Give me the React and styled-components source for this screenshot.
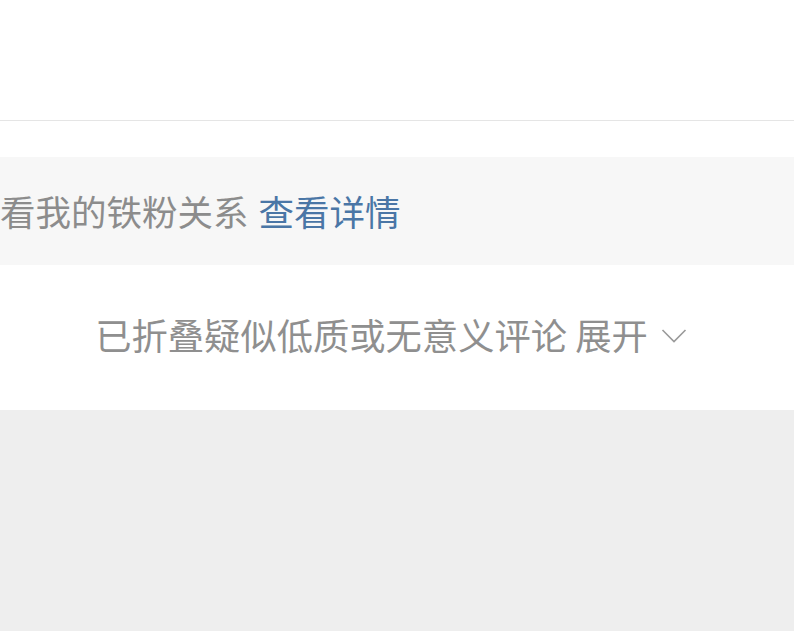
import React from "react";
import styled, { createGlobalStyle } from "styled-components";

const GlobalStyle = createGlobalStyle`
  html, body {
    margin: 0;
    padding: 0;
    background: #eeeeee;
  }
  body {
    font-family: "Noto Sans CJK SC", "Noto Sans", sans-serif;
  }
`;

const Page = styled.div`
  width: 794px;
  min-height: 631px;
  background: #eeeeee;
  overflow: hidden;
`;

const Card = styled.div`
  background: #fff;
`;

const TopArea = styled.div`
  height: 120px;
  border-bottom: 1px solid #e5e5e5;
`;

const Spacer = styled.div`
  height: ${(p) => p.h}px;
`;

const Notice = styled.div`
  display: flex;
  align-items: center;
  height: 108px;
  padding-bottom: 2px;
  box-sizing: border-box;
  background: #f7f7f7;
  font-size: 35.5px;
  color: #8c8c8c;
  white-space: nowrap;
`;

const Link = styled.span`
  color: #4a76a6;
  margin-left: 10px;
`;

const FoldRow = styled.div`
  display: flex;
  align-items: center;
  justify-content: center;
  gap: 13px;
  height: 145px;
  padding-bottom: 7px;
  padding-right: 12px;
  box-sizing: border-box;
  font-size: 36.3px;
  color: #8f8f8f;
  white-space: nowrap;
`;

const Chevron = styled.svg`
  width: 26px;
  height: 16px;
  margin-top: 4px;
`;

export default function App() {
  return (
    <Page>
      <GlobalStyle />
      <Card>
        <TopArea />
        <Spacer h={36} />
        <Notice>
          看我的铁粉关系<Link>查看详情</Link>
        </Notice>
        <FoldRow>
          <span>已折叠疑似低质或无意义评论 展开</span>
          <Chevron viewBox="0 0 26 16" fill="none">
            <path d="M1.5 2 L13 13.5 L24.5 2" stroke="#9a9a9a" strokeWidth="1.6" />
          </Chevron>
        </FoldRow>
      </Card>
    </Page>
  );
}
